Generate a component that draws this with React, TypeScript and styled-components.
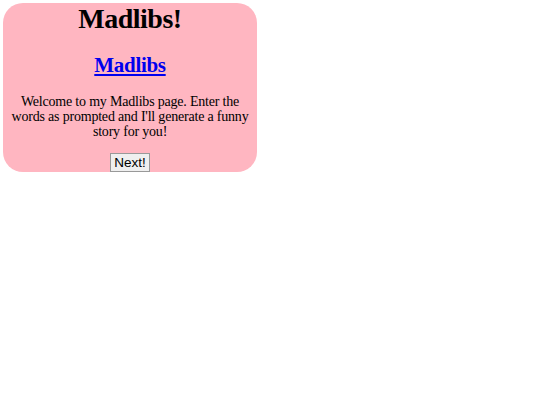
import React from "react";
import styled, { createGlobalStyle } from "styled-components";

const Global = createGlobalStyle`
  html, body { margin: 0; padding: 0; background: #fff; }
  body { font-family: "Liberation Serif", "Times New Roman", serif; }
`;

const Card = styled.div`
  margin: 3px;
  width: 254px;
  background: #ffb6c1;
  border-radius: 20px;
  text-align: center;
  display: flex;
  flex-direction: column;
  align-items: center;
`;

const Title = styled.h1`
  margin: 0;
  font-size: 28px;
  line-height: 32px;
  letter-spacing: -0.5px;
  font-weight: bold;
`;

const Sub = styled.h2`
  margin: 18px 0 0;
  font-size: 21px;
  line-height: 24px;
  letter-spacing: -0.3px;
  a { color: #0000ee; text-decoration: underline; }
`;

const Text = styled.p`
  margin: 17px 0 0;
  padding: 0 7px;
  font-size: 14px;
  line-height: 15px;
  letter-spacing: -0.2px;
`;

const Button = styled.button`
  margin-top: 14px;
  font-family: "Liberation Sans", Arial, sans-serif;
  font-size: 13.5px;
  line-height: 15px;
  padding: 1px 3px;
  background: #efefef;
  border: 1px solid #999;
  border-radius: 0;
  color: #000;
`;

export default function App() {
  return (
    <>
      <Global />
      <Card>
        <Title>Madlibs!</Title>
        <Sub>
          <a href="#">Madlibs</a>
        </Sub>
        <Text>
          Welcome to my Madlibs page. Enter the words as prompted and I'll generate a funny story for you!
        </Text>
        <Button>Next!</Button>
      </Card>
    </>
  );
}
